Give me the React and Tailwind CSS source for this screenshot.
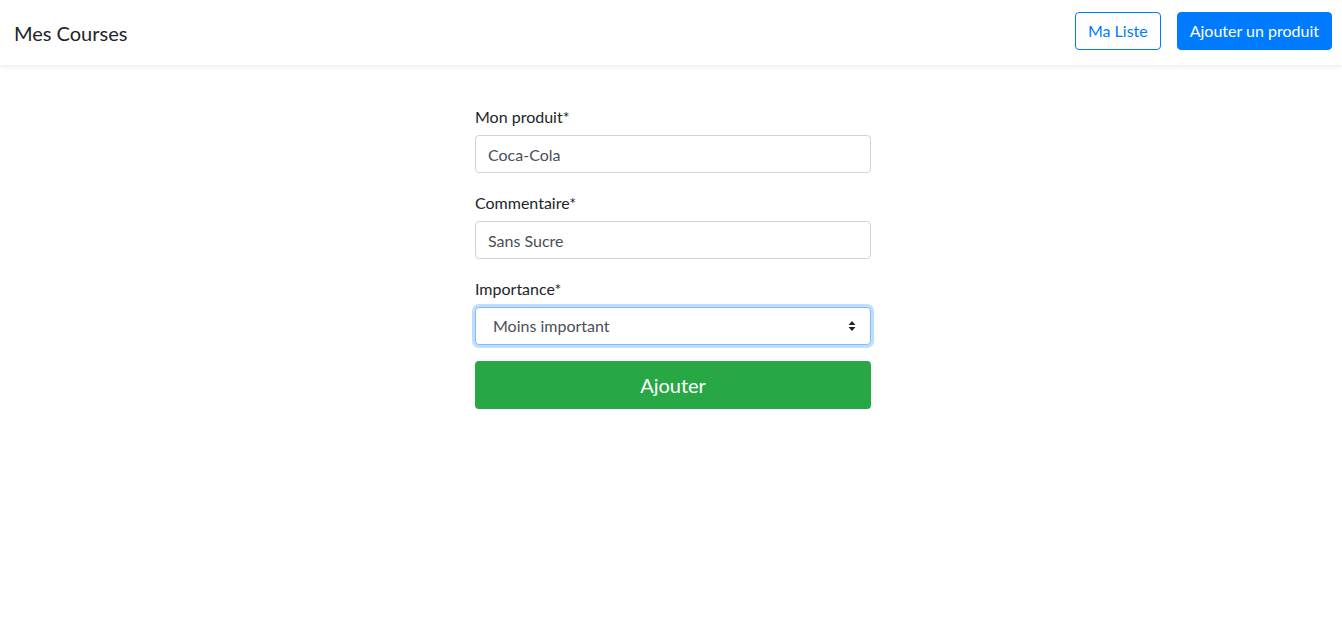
import { useState } from 'react'

const font = { fontFamily: 'Lato, "Noto Sans", Arial, sans-serif' }

const Field = ({ label, children }) => (
  <div className="mb-4">
    <label className="mb-[6px] block pt-[2px] text-base leading-6 text-[#212529]">{label}</label>
    {children}
  </div>
)

const App = () => {
  const [produit, setProduit] = useState('Coca-Cola')
  const [commentaire, setCommentaire] = useState('Sans Sucre')
  const [importance, setImportance] = useState('Moins important')

  return (
    <div className="min-h-screen bg-white text-[#212529]" style={font}>
      {/* Navbar */}
      <nav className="flex h-[65px] items-center justify-between pl-[14px] pr-[10px] shadow-[0_2px_4px_rgba(0,0,0,0.08)]">
        <span className="text-xl leading-[30px] text-[#212529]">Mes Courses</span>
        <div className="flex gap-4 self-start pt-3">
          <button className="h-[38px] rounded border border-[#007bff] px-3 text-base text-[#007bff]">
            Ma Liste
          </button>
          <button className="h-[38px] rounded border border-[#007bff] bg-[#007bff] px-3 text-base text-white">
            Ajouter un produit
          </button>
        </div>
      </nav>

      {/* Form */}
      <div className="flex justify-center pl-[4px] pt-[38px]">
        <form className="w-[396px]" onSubmit={(e) => e.preventDefault()}>
          <Field label="Mon produit*">
            <input
              value={produit}
              onChange={(e) => setProduit(e.target.value)}
              className="block h-[38px] w-full rounded border border-[#ced4da] px-3 text-base text-[#495057] outline-none"
            />
          </Field>
          <Field label="Commentaire*">
            <input
              value={commentaire}
              onChange={(e) => setCommentaire(e.target.value)}
              className="block h-[38px] w-full rounded border border-[#ced4da] px-3 text-base text-[#495057] outline-none"
            />
          </Field>
          <Field label="Importance*">
            <div className="relative">
              <select
                value={importance}
                onChange={(e) => setImportance(e.target.value)}
                className="block h-[38px] w-full appearance-none rounded border border-[#80bdff] bg-white pl-[17px] pr-8 text-base text-[#495057] shadow-[0_0_0_3px_rgba(0,123,255,0.25)] outline-none"
              >
                <option>Moins important</option>
                <option>Important</option>
                <option>Très important</option>
              </select>
              <svg
                className="pointer-events-none absolute right-[15px] top-1/2 -translate-y-1/2"
                width="8"
                height="11"
                viewBox="0 0 8 11"
              >
                <path d="M4 0.5 L7.5 4.5 L0.5 4.5 Z" fill="#212529" />
                <path d="M4 10.5 L7.5 6.5 L0.5 6.5 Z" fill="#212529" />
              </svg>
            </div>
          </Field>
          <button
            type="submit"
            className="block h-12 w-full rounded bg-[#28a745] text-xl text-white"
          >
            Ajouter
          </button>
        </form>
      </div>
    </div>
  )
}

export default App
